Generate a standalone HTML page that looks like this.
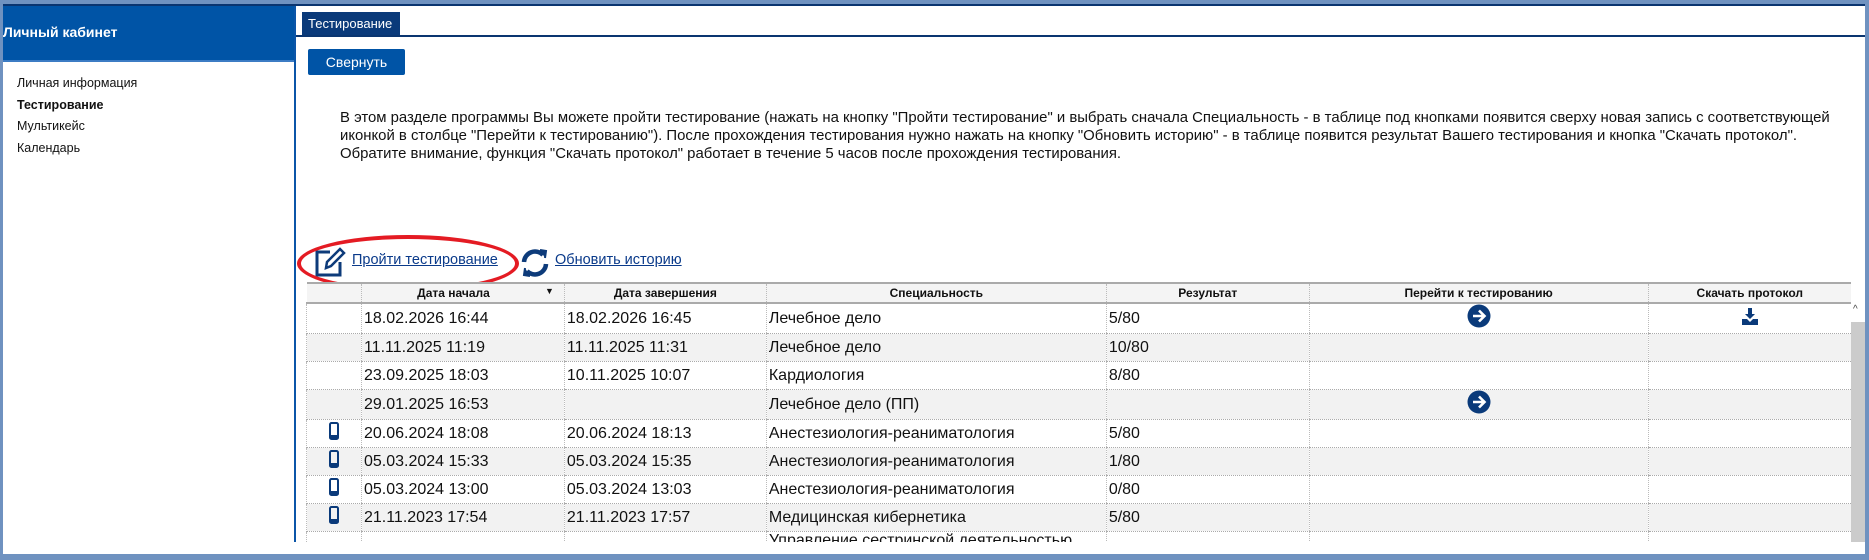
<!DOCTYPE html>
<html><head><meta charset="utf-8"><style>
*{margin:0;padding:0;box-sizing:border-box}
body{width:1869px;height:560px;background:#6f92c0;position:relative;overflow:hidden;font-family:"Liberation Sans",sans-serif;color:#111}
#page{position:absolute;left:3px;top:4px;width:1862px;height:550px;background:#fff;border-top:2px solid #0a3570;overflow:hidden}
#side{position:absolute;left:0;top:0;width:291px;height:100%}
#sh{height:56px;background:#0054a6;color:#fff;font-weight:bold;font-size:14px;padding-top:18px;padding-left:0;border-bottom:2px solid #3c7cc4}
#side ul{list-style:none;margin-top:11px;padding-left:14px;font-size:12.5px}
#side li{height:21.5px;line-height:21.5px}
#div{position:absolute;left:291px;top:0;width:2px;height:536px;background:#0b55a8}
.abs{position:absolute}
#tab{left:299px;top:6px;width:98px;height:23px;background:#0a3a7a;color:#fff;font-size:13px;line-height:24px;padding-left:6px}
#tabline{left:293px;top:29px;width:1569px;height:2px;background:#0a3570}
#btn{left:305px;top:43px;width:97px;height:26px;background:#0054a6;color:#fff;font-size:14px;text-align:center;line-height:26px;border-radius:2px}
#desc{left:337px;top:103px;width:1520px;font-size:14.9px;line-height:18px;white-space:nowrap}
a{color:#0a3a8a;text-decoration:underline;font-size:14.5px}
#ell{left:294px;top:229px;width:222px;height:57px;border:4px solid #e41b23;border-radius:50%}
#wrap{position:absolute;left:303px;top:276px;width:1545px;height:260px;overflow:hidden}
table{border-collapse:collapse;table-layout:fixed;font-size:16px}
th{height:20px;background:#f4f4f4;font-size:12px;font-weight:bold;border-top:2px solid #aaa;border-bottom:2px solid #aaa;border-left:1px dotted #bbb}
td{height:28px;border-bottom:1px dotted #aaa;border-left:1px dotted #bbb;padding-left:2px;white-space:nowrap;overflow:hidden;vertical-align:middle}
tr:nth-child(odd) td{background:#f2f2f2}
tr:nth-child(even) td{background:#fff}
td.c{text-align:center;padding:0}
#sb{left:1848px;top:298px;width:14px;height:238px;background:#fff}
#thumb{left:1848px;top:316px;width:14px;height:220px;background:#cbcbcb}
</style></head><body>
<div id="page">
<div id="side"><div id="sh">Личный кабинет</div>
<ul><li>Личная информация</li><li style="font-weight:bold">Тестирование</li><li>Мультикейс</li><li>Календарь</li></ul></div>
<div id="div"></div>
<div id="tab" class="abs">Тестирование</div>
<div id="tabline" class="abs"></div>
<div id="btn" class="abs">Свернуть</div>
<div id="desc" class="abs">В этом разделе программы Вы можете пройти тестирование (нажать на кнопку "Пройти тестирование" и выбрать сначала Специальность - в таблице под кнопками появится сверху новая запись с соответствующей<br>иконкой в столбце "Перейти к тестированию"). После прохождения тестирования нужно нажать на кнопку "Обновить историю" - в таблице появится результат Вашего тестирования и кнопка "Скачать протокол".<br>Обратите внимание, функция "Скачать протокол" работает в течение 5 часов после прохождения тестирования.</div>
<svg class="abs" style="left:311px;top:240px" width="32" height="32" viewBox="0 0 32 32" fill="none" stroke="#0d3b7a" stroke-width="3"><path d="M16 6H3v23h23V16"/><path d="M12 22l1-6L26 3l4 4-13 13z" stroke-width="2.5"/></svg>
<a class="abs" style="left:349px;top:246px">Пройти тестирование</a>
<svg class="abs" style="left:517px;top:241px" width="30" height="32" viewBox="0 0 30 32" fill="none" stroke="#0d3b7a" stroke-width="4.5"><path d="M4 15A11 11 0 0 1 23 8"/><path d="M26 17A11 11 0 0 1 7 24"/><path d="M20 3l6 1-1 7" fill="#0d3b7a" stroke-width="2"/><path d="M10 29l-6-1 1-7" fill="#0d3b7a" stroke-width="2"/></svg>
<a class="abs" style="left:552px;top:246px">Обновить историю</a>
<div id="ell" class="abs"></div>
<div id="wrap"><table>
<colgroup><col style="width:55px"><col style="width:203px"><col style="width:202px"><col style="width:340px"><col style="width:203px"><col style="width:339px"><col style="width:203px"></colgroup>
<tr><th style="border-left:none"></th><th>Дата начала <span style="float:right;margin-right:10px;font-size:9px">▼</span></th><th>Дата завершения</th><th>Специальность</th><th>Результат</th><th>Перейти к тестированию</th><th>Скачать протокол</th></tr>
<tr><td></td><td>18.02.2026 16:44</td><td>18.02.2026 16:45</td><td>Лечебное дело</td><td>5/80</td><td class="c"><svg width="24" height="24" viewBox="0 0 24 24"><circle cx="12" cy="12" r="11.5" fill="#0a3a7a"/><path d="M6 12h11M12 6.5l5.5 5.5-5.5 5.5" stroke="#fff" stroke-width="2.6" fill="none"/></svg></td><td class="c"><svg width="16" height="17" viewBox="0 0 16 17"><path d="M6 0h4v6h3l-5 5-5-5h3z" fill="#0a3a7a"/><path d="M0 11h5l3 3 3-3h5v6H0z" fill="#0a3a7a"/></svg></td></tr>
<tr><td></td><td>11.11.2025 11:19</td><td>11.11.2025 11:31</td><td>Лечебное дело</td><td>10/80</td><td></td><td></td></tr>
<tr><td></td><td>23.09.2025 18:03</td><td>10.11.2025 10:07</td><td>Кардиология</td><td>8/80</td><td></td><td></td></tr>
<tr><td style="height:26px"></td><td>29.01.2025 16:53</td><td></td><td>Лечебное дело (ПП)</td><td></td><td class="c"><svg width="24" height="24" viewBox="0 0 24 24"><circle cx="12" cy="12" r="11.5" fill="#0a3a7a"/><path d="M6 12h11M12 6.5l5.5 5.5-5.5 5.5" stroke="#fff" stroke-width="2.6" fill="none"/></svg></td><td></td></tr>
<tr><td class="c"><svg width="10" height="18"><rect x="1" y="1" width="8" height="16" rx="1.5" fill="none" stroke="#0a3a7a" stroke-width="2"/><rect x="1" y="13" width="8" height="4" fill="#0a3a7a"/></svg></td><td>20.06.2024 18:08</td><td>20.06.2024 18:13</td><td>Анестезиология-реаниматология</td><td>5/80</td><td></td><td></td></tr>
<tr><td class="c"><svg width="10" height="18"><rect x="1" y="1" width="8" height="16" rx="1.5" fill="none" stroke="#0a3a7a" stroke-width="2"/><rect x="1" y="13" width="8" height="4" fill="#0a3a7a"/></svg></td><td>05.03.2024 15:33</td><td>05.03.2024 15:35</td><td>Анестезиология-реаниматология</td><td>1/80</td><td></td><td></td></tr>
<tr><td class="c"><svg width="10" height="18"><rect x="1" y="1" width="8" height="16" rx="1.5" fill="none" stroke="#0a3a7a" stroke-width="2"/><rect x="1" y="13" width="8" height="4" fill="#0a3a7a"/></svg></td><td>05.03.2024 13:00</td><td>05.03.2024 13:03</td><td>Анестезиология-реаниматология</td><td>0/80</td><td></td><td></td></tr>
<tr><td class="c"><svg width="10" height="18"><rect x="1" y="1" width="8" height="16" rx="1.5" fill="none" stroke="#0a3a7a" stroke-width="2"/><rect x="1" y="13" width="8" height="4" fill="#0a3a7a"/></svg></td><td>21.11.2023 17:54</td><td>21.11.2023 17:57</td><td>Медицинская кибернетика</td><td>5/80</td><td></td><td></td></tr>
<tr><td style="height:40px"></td><td>20.11.2023 14:20</td><td>21.03.2024 10:22</td><td style="line-height:18px;vertical-align:top">Управление сестринской деятельностью</td><td>0/80</td><td></td><td></td></tr>
</table></div>
<div id="sb" class="abs"></div><div id="thumb" class="abs"></div>
<div class="abs" style="left:1850px;top:298px;font-size:10px;color:#444">^</div>
</div>
</body></html>
